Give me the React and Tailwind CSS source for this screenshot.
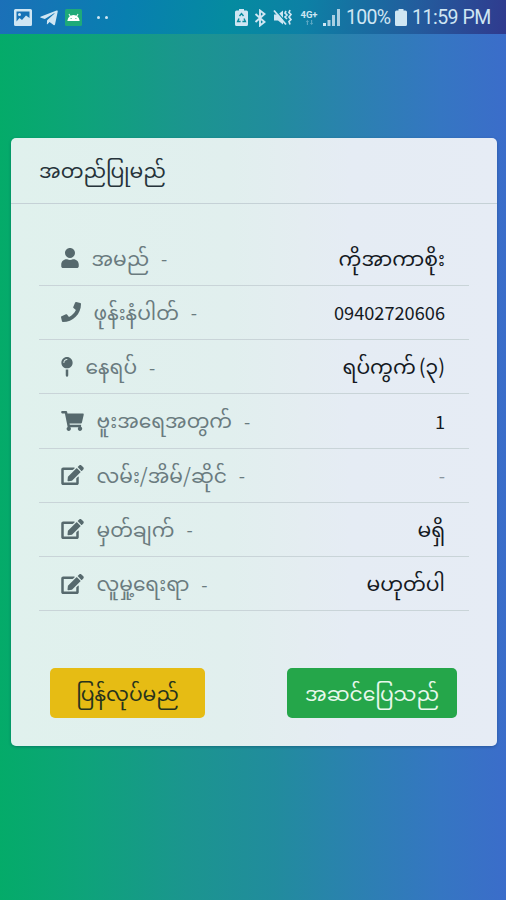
import React from 'react';
import { FaUser, FaPhone, FaMapPin, FaShoppingCart, FaEdit, FaTelegramPlane } from 'react-icons/fa';

const rows = [
  { icon: FaUser, label: 'အမည်', value: 'ကိုအာကာစိုး', iconClass: 'w-[18px]' },
  { icon: FaPhone, label: 'ဖုန်းနံပါတ်', value: '09402720606', iconClass: 'w-[20px]', latin: true },
  { icon: FaMapPin, label: 'နေရပ်', value: 'ရပ်ကွက် (၃)', iconClass: 'w-[12px]', spaced: true },
  { icon: FaShoppingCart, label: 'ဗူးအရေအတွက်', value: '1', iconClass: 'w-[23px]', latin: true },
  { icon: FaEdit, label: 'လမ်း/အိမ်/ဆိုင်', value: '-', iconClass: 'w-[23px]', latin: true, muted: true },
  { icon: FaEdit, label: 'မှတ်ချက်', value: 'မရှိ', iconClass: 'w-[23px]' },
  { icon: FaEdit, label: 'လူမှု့ရေးရာ', value: 'မဟုတ်ပါ', iconClass: 'w-[23px]' },
];

function StatusBar() {
  return (
    <div className="h-[34px] shrink-0 flex items-center justify-between pl-[14px] pr-[15px] pt-[1px] text-[#cfe6f3] bg-[linear-gradient(100deg,#1b70b8_0%,#087fb0_25%,#058ba0_45%,#0d80a5_60%,#235c9d_82%,#303a8e_100%)]">
      <div className="flex items-center">
        <svg className="w-[18px] h-[17px]" viewBox="0 0 18 17" fill="currentColor">
          <path fillRule="evenodd" d="M1.500 0h15A1.500 1.500 0 0 1 18 1.500v14a1.500 1.500 0 0 1-1.500 1.500h-15A1.500 1.500 0 0 1 0 15.500v-14A1.500 1.500 0 0 1 1.500 0zM2.500 2.500v10l3-3.500 2.500 2 4-4.500 3.500 2.500v-6.500zM5.500 4a1.500 1.500 0 1 1 0 3 1.500 1.500 0 0 1 0-3z" />
        </svg>
        <FaTelegramPlane className="w-[20px] h-[20px] ml-[7px]" />
        <svg className="w-[17px] h-[17px] ml-[6px]" viewBox="0 0 17 17">
          <rect width="17" height="17" rx="1.500" fill="#1eaa79" />
          <path d="M2.300 12a6 6 0 0 1 2.500-4.700L3.500 5.200l.8-.5 1.300 2a6.500 6.500 0 0 1 5.800 0l1.300-2 .8.5-1.300 2.100A6 6 0 0 1 14.700 12z" fill="#fff" />
          <circle cx="6.100" cy="9.500" r=".6" fill="#1eaa79" />
          <circle cx="10.900" cy="9.500" r=".6" fill="#1eaa79" />
        </svg>
        <span className="w-[3px] h-[3px] rounded-full bg-current ml-[15px]" />
        <span className="w-[3px] h-[3px] rounded-full bg-current ml-[5px]" />
      </div>
      <div className="flex items-center">
        <svg className="w-[13px] h-[17px]" viewBox="0 0 13 17" fill="currentColor">
          <path d="M4 0h5v1.500h2.500A1.500 1.500 0 0 1 13 3v12.500a1.500 1.500 0 0 1-1.500 1.500h-10A1.500 1.500 0 0 1 0 15.500V3a1.500 1.500 0 0 1 1.500-1.500H4z" />
          <path d="M4.500 7 6.500 4.500l2 2.500M4 9.500l-1.400 3h3M9 9.500l1.400 3h-3" fill="none" stroke="#078b9d" strokeWidth="1.400" />
        </svg>
        <svg className="w-[12px] h-[18px] ml-[6px]" viewBox="0 0 12 18" fill="none" stroke="currentColor" strokeWidth="1.900">
          <path d="M1.500 5l9 8L6 16.500v-15L10.500 5l-9 8" />
        </svg>
        <svg className="w-[19px] h-[17px] ml-[7px]" viewBox="0 0 19 17" fill="none" stroke="currentColor">
          <path d="M1 5.500h4l5-4v14l-5-4H1z" fill="currentColor" stroke="none" />
          <path d="M2 .5l11 13" stroke="#0787a2" strokeWidth="1.200" />
          <path d="M1 1.500l12 14" strokeWidth="1.800" />
          <path d="M13 2l-1 2 2 2-2 2 2 2M17 1l-1 2.500 2 2-2 2.500 2 2.500-2 2 1 3" strokeWidth="1.700" />
        </svg>
        <div className="w-[18px] ml-[8px] flex flex-col items-center">
          <span className="text-[9.500px] leading-[9px] font-bold font-[Roboto,sans-serif] whitespace-nowrap">4G+</span>
          <svg className="w-[9px] h-[5px] mt-[1px] opacity-40" viewBox="0 0 9 6" fill="currentColor">
            <path d="M2 0l2 2.500H2.700V6H1.300V2.500H0zM7 6L5 3.500h1.300V0h1.400v3.500H9z" />
          </svg>
        </div>
        <svg className="w-[17px] h-[17px] ml-[5px]" viewBox="0 0 17 17" fill="currentColor">
          <rect x="0" y="14" width="3" height="3" />
          <rect x="4.500" y="11" width="3" height="6" opacity=".8" />
          <rect x="9" y="6" width="3" height="11" opacity=".8" />
          <rect x="14" y="0" width="3" height="17" opacity=".8" />
        </svg>
        <span className="w-[44px] ml-[6px] text-[19.500px] leading-[22px] font-[Roboto,sans-serif] tracking-[-0.700px] whitespace-nowrap">100%</span>
        <svg className="w-[12px] h-[17px] ml-[5px]" viewBox="0 0 12 17" fill="currentColor">
          <path d="M3.500 0h5v1.500H10.500a1.500 1.500 0 0 1 1.500 1.500v12.500a1.500 1.500 0 0 1-1.500 1.500h-9a1.500 1.500 0 0 1-1.500-1.500V3a1.500 1.500 0 0 1 1.500-1.500h2z" />
        </svg>
        <span className="w-[79px] ml-[5px] text-[19.500px] leading-[22px] font-[Roboto,sans-serif] tracking-[-0.500px] whitespace-nowrap">11:59 PM</span>
      </div>
    </div>
  );
}

function DetailRow({ row }) {
  const Icon = row.icon;
  return (
    <li className="h-[54.250px] flex items-center justify-between pl-[22px] pr-[24px] border-b border-[#c9d4d8]">
      <div className="flex items-center text-[#6a7b7f]">
        <Icon className={`shrink-0 h-[20px] text-[#56696d] ${row.iconClass}`} />
        <span className="mb-[1px] ml-[12.500px] text-[20.200px] leading-[30px] whitespace-nowrap">{row.label}</span>
        <span className="ml-[12px] text-[18px] leading-[30px]">-</span>
      </div>
      <span
        className={`whitespace-nowrap leading-[30px] ${row.latin ? 'text-[18.200px]' : 'mb-[3px] text-[20.300px]'} ${
          row.muted ? 'text-[#8b969f]' : 'text-[#14191f]'
        } ${row.spaced ? '[word-spacing:-1.500px]' : ''}`}
      >
        {row.value}
      </span>
    </li>
  );
}

export default function App() {
  return (
    <div className="w-[506px] h-[900px] overflow-hidden flex flex-col font-['Noto_Sans_CJK_SC','Noto_Sans_Myanmar',sans-serif] bg-[linear-gradient(90deg,#04ab69_0%,#0ea37a_17%,#1b958f_37%,#218c9d_54%,#2b81b0_70%,#3576c2_87%,#3b6dca_100%)]">
      <StatusBar />
      <div className="mt-[104px] ml-[11px] w-[486px] h-[608px] rounded-[5px] bg-[linear-gradient(90deg,#e0f1ed_0%,#e1efee_45%,#e4edf1_60%,#e5ecf4_70%,#e6ecf5_100%)] shadow-[0_1px_3px_rgba(0,40,80,0.35)]">
        <div className="h-[66px] flex items-center pl-[28px] pb-[4px] border-b border-[#c5d1d6]">
          <h1 className="text-[20.300px] leading-[30px] text-[#26333a] whitespace-nowrap">အတည်ပြုမည်</h1>
        </div>
        <ul className="mt-[27.500px] mx-[28px]">
          {rows.map((row) => (
            <DetailRow key={row.label} row={row} />
          ))}
        </ul>
        <div className="mt-[56.500px] pl-[39px] pr-[40px] flex justify-between">
          <button className="w-[155px] h-[50px] pb-[2px] rounded-[5px] bg-[#e6bc14] text-[#26331d] text-[20.300px] leading-[30px] whitespace-nowrap">ပြန်လုပ်မည်</button>
          <button className="w-[170px] h-[50px] pb-[2px] rounded-[5px] bg-[#25a64a] text-[#e8f8ec] text-[20.300px] leading-[30px] whitespace-nowrap">အဆင်ပြေသည်</button>
        </div>
      </div>
    </div>
  );
}
